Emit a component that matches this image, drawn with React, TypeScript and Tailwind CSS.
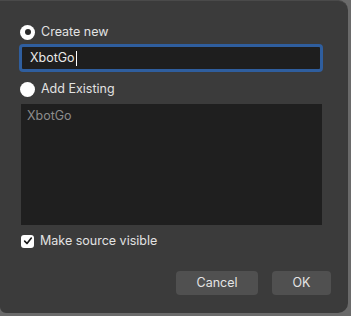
export default function App() {
  return (
    <div className="w-[351px] h-[316px] bg-[#6a6a6a] font-['Inter',sans-serif] text-[12.5px]">
      <div className="w-[348px] h-[313px] bg-[#3b3b3b] rounded-br-[10px] rounded-tr-[10px] rounded-bl-[6px] border-t border-[#4a4a4a] flex flex-col pl-[20px] pr-[26px] pt-[22px]">
        {/* Create new */}
        <label className="flex items-center gap-[6px] text-[#e2e2e2] h-[18px]">
          <span className="w-[15px] h-[15px] rounded-full bg-white flex items-center justify-center">
            <span className="w-[6px] h-[6px] rounded-full bg-[#2a2a2a]" />
          </span>
          Create new
        </label>
        <div className="mt-[3px] -mx-[1px] h-[28px] rounded-[4px] border-[3px] border-[#2f5e9e] bg-[#1e1e1e] flex items-center px-[8px] text-[#e8e8e8]">
          XbotGo<span className="w-px h-[15px] bg-white ml-px" />
        </div>
        {/* Add Existing */}
        <label className="mt-[8px] flex items-center gap-[6px] text-[#e2e2e2] h-[18px]">
          <span className="w-[15px] h-[15px] rounded-full bg-white" />
          Add Existing
        </label>
        <div className="mt-[6px] ml-px h-[121px] bg-[#1f1f1f] px-[6px] pt-[3px] text-[#8c8c8c]">
          XbotGo
        </div>
        {/* checkbox */}
        <label className="mt-[8px] ml-px flex items-center gap-[6px] text-[#e2e2e2] h-[16px]">
          <span className="w-[13px] h-[13px] rounded-[3px] bg-white flex items-center justify-center">
            <svg viewBox="0 0 12 12" className="w-[10px] h-[10px]">
              <path d="M2 6.2 L4.8 9 L10 2.5" fill="none" stroke="#1a1a1a" strokeWidth="2" strokeLinecap="round" strokeLinejoin="round" />
            </svg>
          </span>
          Make source visible
        </label>
        <div className="mt-[22px] flex justify-end gap-[14px] -mr-[9px]">
          <button className="w-[82px] h-[24px] rounded-[4px] bg-[#505050] text-[#e4e4e4]">Cancel</button>
          <button className="w-[59px] h-[24px] rounded-[4px] bg-[#505050] text-[#e4e4e4]">OK</button>
        </div>
      </div>
    </div>
  );
}
